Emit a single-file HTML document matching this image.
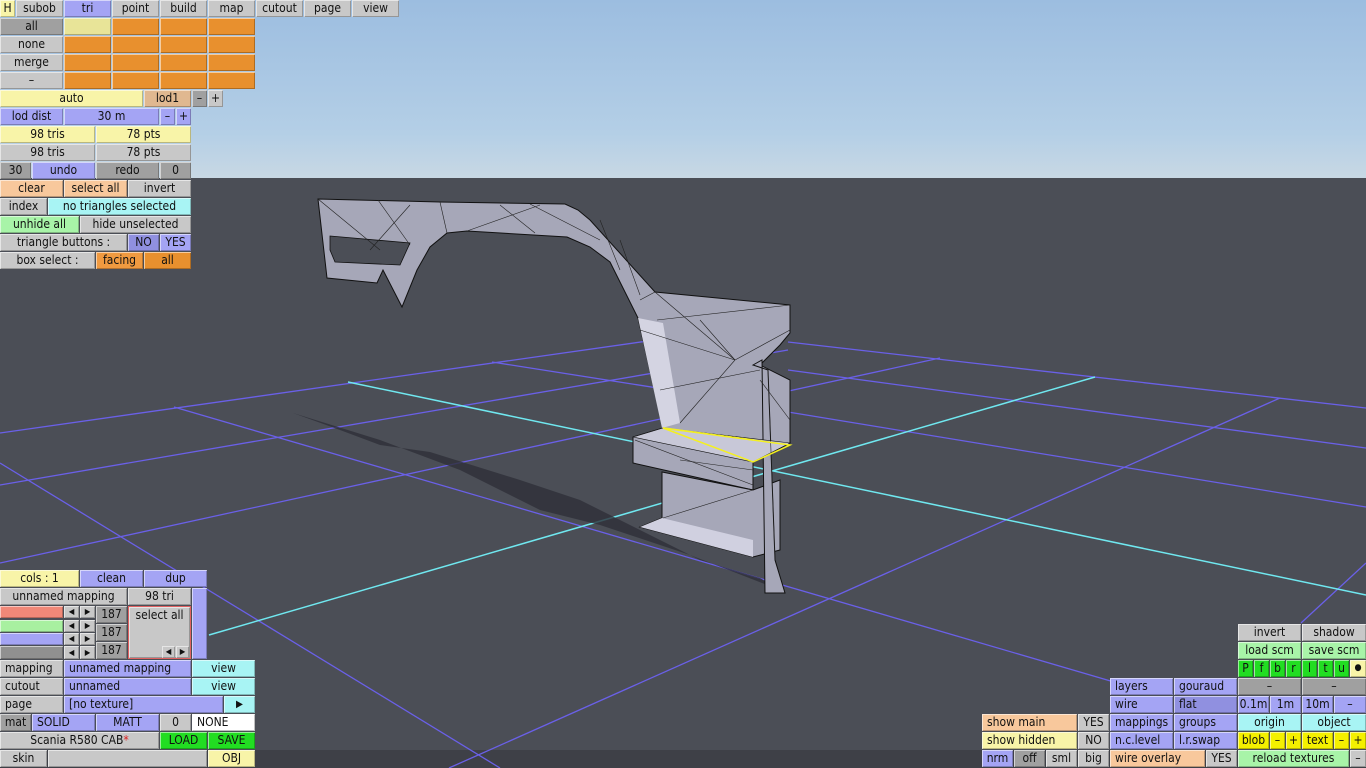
<!DOCTYPE html>
<html><head><meta charset="utf-8"><style>
*{margin:0;padding:0;box-sizing:border-box}
body{width:1366px;height:768px;overflow:hidden;position:relative;background:#4b4e56;font-family:"DejaVu Sans Condensed","Liberation Sans",sans-serif;font-size:12px;color:#111}
.b{position:absolute;height:17px;line-height:17px;text-align:center;white-space:nowrap;overflow:hidden;box-shadow:inset 1px 1px 0 rgba(255,255,255,.55),inset -1px -1px 0 rgba(0,0,0,.25)}
.l{text-align:left;padding-left:5px}
.g{background:#c8c8c8}.d{background:#a0a0a0}.u{background:#a4a4f4}.ud{background:#9090e0}.y{background:#f8f4a8}.o{background:#e8902e}.p{background:#f8c89c}.t{background:#e0b890}.c{background:#a8f4f4}.gr{background:#a8f4a8}.G{background:#22dd22}.Y{background:#f4f000}.w{background:#fff}
</style></head><body>
<div style="position:absolute;left:0;top:0;width:1366px;height:178px;background:linear-gradient(#9cbde0,#b4cfe6 75%,#c8d8e4)"></div>
<div style="position:absolute;left:0;top:750px;width:1366px;height:18px;background:#3e4047"></div>
<svg style="position:absolute;left:0;top:0" width="1366" height="768">
<g stroke="#6a60e8" stroke-width="1.3" fill="none">
<line x1="0" y1="433" x2="683" y2="336"/>
<line x1="492" y1="362" x2="683" y2="392"/>
<line x1="0" y1="485" x2="788" y2="350"/>
<line x1="0" y1="563" x2="940" y2="358"/>
<line x1="0" y1="463" x2="500" y2="768"/>
<line x1="174" y1="407" x2="1114" y2="682"/>
<line x1="788" y1="342" x2="1366" y2="408"/>
<line x1="788" y1="370" x2="1366" y2="448"/>
<line x1="788" y1="412" x2="1366" y2="507"/>
<line x1="449" y1="768" x2="1280" y2="398"/>
<line x1="1301" y1="623" x2="1366" y2="563"/>
</g>
<g stroke="#70e8f0" stroke-width="1.5"><line x1="348" y1="382" x2="1366" y2="595"/><line x1="209" y1="635" x2="1095" y2="377"/></g>
<polygon points="293,413 340,430 380,445 430,452 520,480 580,500 620,520 700,560 760,578 780,590 690,555 600,525 540,510 460,470 380,440" fill="#2e3038" opacity=".8"/>
<g fill="#a6a7b8" stroke="#111" stroke-width="1">
<polygon points="318,199 440,202 565,204 578,210 590,220 655,292 790,305 790,333 780,345 760,365 790,380 790,443 753,462 753,490 633,463 633,437 663,428 638,318 610,262 590,247 567,237 467,231 447,233 430,247 417,270 402,307 383,270 377,283 327,278"/>
<polygon points="662,472 753,490 780,480 780,550 753,557 640,527 662,518" />
<polygon points="753,365 762,360 765,593 785,593 775,560 768,370"/>
</g>
<polygon points="330,236 410,243 400,265 335,262 330,250" fill="#4b4e56" stroke="#111" stroke-width=".8"/>
<polygon points="638,318 663,323 680,423 662,428" fill="#d4d4e2"/>
<polygon points="633,437 663,428 790,443 753,462" fill="#c8c8d8" stroke="#111" stroke-width=".6"/>
<polygon points="640,527 662,518 753,540 753,557" fill="#d0d0e0"/>
<g stroke="#222" stroke-width=".6" fill="none">
<line x1="378" y1="200" x2="410" y2="245"/><line x1="440" y1="202" x2="447" y2="233"/><line x1="410" y1="205" x2="370" y2="250"/><line x1="540" y1="205" x2="467" y2="231"/><line x1="500" y1="205" x2="535" y2="233"/><line x1="530" y1="204" x2="600" y2="240"/>
<line x1="318" y1="199" x2="380" y2="250"/><line x1="600" y1="220" x2="620" y2="270"/><line x1="620" y1="240" x2="640" y2="295"/>
<line x1="655" y1="292" x2="640" y2="300"/><line x1="655" y1="292" x2="735" y2="360"/><line x1="657" y1="320" x2="790" y2="305"/>
<line x1="660" y1="390" x2="760" y2="370"/><line x1="680" y1="423" x2="735" y2="360"/><line x1="640" y1="330" x2="735" y2="360"/><line x1="735" y1="360" x2="790" y2="330"/><line x1="700" y1="320" x2="735" y2="360"/>
<line x1="635" y1="440" x2="753" y2="485"/><line x1="663" y1="518" x2="753" y2="490"/><line x1="680" y1="460" x2="753" y2="470"/>
<line x1="768" y1="370" x2="775" y2="560"/><line x1="760" y1="380" x2="790" y2="420"/>
</g>
<polygon points="663,428 790,445 753,462" fill="none" stroke="#f4f020" stroke-width="1.5"/>
<line x1="663" y1="428" x2="753" y2="440" stroke="#f4f020" stroke-width="1.5"/>
</svg>

<div class="b y" style="left:0;top:0;width:15px">H</div>
<div class="b g" style="left:16px;top:0;width:47px">subob</div>
<div class="b u" style="left:64px;top:0;width:47px">tri</div>
<div class="b g" style="left:112px;top:0;width:47px">point</div>
<div class="b g" style="left:160px;top:0;width:47px">build</div>
<div class="b g" style="left:208px;top:0;width:47px">map</div>
<div class="b g" style="left:256px;top:0;width:47px">cutout</div>
<div class="b g" style="left:304px;top:0;width:47px">page</div>
<div class="b g" style="left:352px;top:0;width:47px">view</div>

<div class="b d" style="left:0;top:18px;width:63px">all</div>
<div class="b y" style="left:64px;top:18px;width:47px;background:#e8e498"></div>
<div class="b o" style="left:112px;top:18px;width:47px"></div><div class="b o" style="left:160px;top:18px;width:47px"></div><div class="b o" style="left:208px;top:18px;width:47px"></div>
<div class="b g" style="left:0;top:36px;width:63px">none</div>
<div class="b o" style="left:64px;top:36px;width:47px"></div><div class="b o" style="left:112px;top:36px;width:47px"></div><div class="b o" style="left:160px;top:36px;width:47px"></div><div class="b o" style="left:208px;top:36px;width:47px"></div>
<div class="b g" style="left:0;top:54px;width:63px">merge</div>
<div class="b o" style="left:64px;top:54px;width:47px"></div><div class="b o" style="left:112px;top:54px;width:47px"></div><div class="b o" style="left:160px;top:54px;width:47px"></div><div class="b o" style="left:208px;top:54px;width:47px"></div>
<div class="b g" style="left:0;top:72px;width:63px">–</div>
<div class="b o" style="left:64px;top:72px;width:47px"></div><div class="b o" style="left:112px;top:72px;width:47px"></div><div class="b o" style="left:160px;top:72px;width:47px"></div><div class="b o" style="left:208px;top:72px;width:47px"></div>

<div class="b y" style="left:0;top:90px;width:143px">auto</div>
<div class="b t" style="left:144px;top:90px;width:47px">lod1</div>
<div class="b d" style="left:192px;top:90px;width:15px">–</div>
<div class="b g" style="left:208px;top:90px;width:15px">+</div>

<div class="b u" style="left:0;top:108px;width:63px">lod dist</div>
<div class="b u" style="left:64px;top:108px;width:95px">30 m</div>
<div class="b u" style="left:160px;top:108px;width:15px">–</div>
<div class="b u" style="left:176px;top:108px;width:15px">+</div>

<div class="b y" style="left:0;top:126px;width:95px">98 tris</div>
<div class="b y" style="left:96px;top:126px;width:95px">78 pts</div>
<div class="b g" style="left:0;top:144px;width:95px">98 tris</div>
<div class="b g" style="left:96px;top:144px;width:95px">78 pts</div>

<div class="b d" style="left:0;top:162px;width:31px">30</div>
<div class="b u" style="left:32px;top:162px;width:63px">undo</div>
<div class="b d" style="left:96px;top:162px;width:63px">redo</div>
<div class="b d" style="left:160px;top:162px;width:31px">0</div>

<div class="b p" style="left:0;top:180px;width:63px">clear</div>
<div class="b p" style="left:64px;top:180px;width:63px">select all</div>
<div class="b g" style="left:128px;top:180px;width:63px">invert</div>

<div class="b g" style="left:0;top:198px;width:47px">index</div>
<div class="b c" style="left:48px;top:198px;width:143px">no triangles selected</div>

<div class="b gr" style="left:0;top:216px;width:79px">unhide all</div>
<div class="b g" style="left:80px;top:216px;width:111px">hide unselected</div>

<div class="b g" style="left:0;top:234px;width:127px">triangle buttons :</div>
<div class="b ud" style="left:128px;top:234px;width:31px">NO</div>
<div class="b u" style="left:160px;top:234px;width:31px">YES</div>

<div class="b g" style="left:0;top:252px;width:95px">box select :</div>
<div class="b o" style="left:96px;top:252px;width:47px;background:#f09a40">facing</div>
<div class="b o" style="left:144px;top:252px;width:47px">all</div>

<div class="b y" style="left:0;top:570px;width:79px">cols : 1</div>
<div class="b u" style="left:80px;top:570px;width:63px">clean</div>
<div class="b u" style="left:144px;top:570px;width:63px">dup</div>
<div class="b g" style="left:0;top:588px;width:127px">unnamed mapping</div>
<div class="b g" style="left:128px;top:588px;width:63px">98 tri</div>
<div class="b u" style="left:192px;top:588px;width:15px;height:71px"></div>
<div class="b" style="left:0;top:606px;width:63px;height:12px;background:#f08878"></div>
<div class="b" style="left:0;top:620px;width:63px;height:12px;background:#a8f0a0"></div>
<div class="b" style="left:0;top:633px;width:63px;height:12px;background:#a4a4f4"></div>
<div class="b" style="left:0;top:646px;width:63px;height:13px;background:#909090"></div>
<div class="b g" style="left:64px;top:606px;width:15px;height:12px;font-size:8px;line-height:12px">◀</div><div class="b g" style="left:80px;top:606px;width:15px;height:12px;font-size:8px;line-height:12px">▶</div>
<div class="b g" style="left:64px;top:620px;width:15px;height:12px;font-size:8px;line-height:12px">◀</div><div class="b g" style="left:80px;top:620px;width:15px;height:12px;font-size:8px;line-height:12px">▶</div>
<div class="b g" style="left:64px;top:633px;width:15px;height:12px;font-size:8px;line-height:12px">◀</div><div class="b g" style="left:80px;top:633px;width:15px;height:12px;font-size:8px;line-height:12px">▶</div>
<div class="b g" style="left:64px;top:646px;width:15px;height:13px;font-size:8px;line-height:13px">◀</div><div class="b g" style="left:80px;top:646px;width:15px;height:13px;font-size:8px;line-height:13px">▶</div>
<div class="b d" style="left:96px;top:606px;width:31px">187</div>
<div class="b d" style="left:96px;top:624px;width:31px">187</div>
<div class="b d" style="left:96px;top:642px;width:31px">187</div>
<div class="b g" style="left:128px;top:606px;width:63px;height:53px;border:1px solid #e06060;line-height:16px">select all</div>
<div class="b g" style="left:162px;top:646px;width:13px;height:12px;font-size:8px;line-height:12px">◀</div><div class="b g" style="left:176px;top:646px;width:13px;height:12px;font-size:8px;line-height:12px">▶</div>

<div class="b g l" style="left:0;top:660px;width:63px">mapping</div>
<div class="b u l" style="left:64px;top:660px;width:127px">unnamed mapping</div>
<div class="b c" style="left:192px;top:660px;width:63px">view</div>
<div class="b g l" style="left:0;top:678px;width:63px">cutout</div>
<div class="b u l" style="left:64px;top:678px;width:127px">unnamed</div>
<div class="b c" style="left:192px;top:678px;width:63px">view</div>
<div class="b g l" style="left:0;top:696px;width:63px">page</div>
<div class="b u l" style="left:64px;top:696px;width:159px">[no texture]</div>
<div class="b c" style="left:224px;top:696px;width:31px;font-size:10px">▶</div>
<div class="b d" style="left:0;top:714px;width:31px">mat</div>
<div class="b u l" style="left:32px;top:714px;width:63px">SOLID</div>
<div class="b u" style="left:96px;top:714px;width:63px">MATT</div>
<div class="b g" style="left:160px;top:714px;width:31px">0</div>
<div class="b w l" style="left:192px;top:714px;width:63px">NONE</div>
<div class="b g" style="left:0;top:732px;width:159px">Scania R580 CAB<span style="color:#e02020">*</span></div>
<div class="b G" style="left:160px;top:732px;width:47px">LOAD</div>
<div class="b G" style="left:208px;top:732px;width:47px">SAVE</div>
<div class="b g" style="left:0;top:750px;width:47px">skin</div>
<div class="b g" style="left:48px;top:750px;width:159px"></div>
<div class="b y" style="left:208px;top:750px;width:47px">OBJ</div>

<div class="b g" style="left:1238px;top:624px;width:63px">invert</div>
<div class="b g" style="left:1302px;top:624px;width:64px">shadow</div>
<div class="b gr" style="left:1238px;top:642px;width:63px">load scm</div>
<div class="b gr" style="left:1302px;top:642px;width:64px">save scm</div>
<div class="b G" style="left:1238px;top:660px;width:15px">P</div>
<div class="b G" style="left:1254px;top:660px;width:15px">f</div>
<div class="b G" style="left:1270px;top:660px;width:15px">b</div>
<div class="b G" style="left:1286px;top:660px;width:15px">r</div>
<div class="b G" style="left:1302px;top:660px;width:15px">l</div>
<div class="b G" style="left:1318px;top:660px;width:15px">t</div>
<div class="b G" style="left:1334px;top:660px;width:15px">u</div>
<div class="b y" style="left:1350px;top:660px;width:16px;font-size:9px">●</div>
<div class="b u l" style="left:1110px;top:678px;width:63px">layers</div>
<div class="b u l" style="left:1174px;top:678px;width:63px">gouraud</div>
<div class="b d" style="left:1238px;top:678px;width:63px">–</div>
<div class="b d" style="left:1302px;top:678px;width:64px">–</div>
<div class="b u l" style="left:1110px;top:696px;width:63px">wire</div>
<div class="b ud l" style="left:1174px;top:696px;width:63px">flat</div>
<div class="b u" style="left:1238px;top:696px;width:31px">0.1m</div>
<div class="b u" style="left:1270px;top:696px;width:31px">1m</div>
<div class="b u" style="left:1302px;top:696px;width:31px">10m</div>
<div class="b u" style="left:1334px;top:696px;width:32px">–</div>
<div class="b p l" style="left:982px;top:714px;width:95px">show main</div>
<div class="b g" style="left:1078px;top:714px;width:31px">YES</div>
<div class="b u l" style="left:1110px;top:714px;width:63px">mappings</div>
<div class="b u l" style="left:1174px;top:714px;width:63px">groups</div>
<div class="b c" style="left:1238px;top:714px;width:63px">origin</div>
<div class="b c" style="left:1302px;top:714px;width:64px">object</div>
<div class="b y l" style="left:982px;top:732px;width:95px">show hidden</div>
<div class="b g" style="left:1078px;top:732px;width:31px">NO</div>
<div class="b u l" style="left:1110px;top:732px;width:63px">n.c.level</div>
<div class="b u l" style="left:1174px;top:732px;width:63px">l.r.swap</div>
<div class="b Y" style="left:1238px;top:732px;width:31px">blob</div>
<div class="b Y" style="left:1270px;top:732px;width:15px">–</div>
<div class="b Y" style="left:1286px;top:732px;width:15px">+</div>
<div class="b Y" style="left:1302px;top:732px;width:31px">text</div>
<div class="b Y" style="left:1334px;top:732px;width:15px">–</div>
<div class="b Y" style="left:1350px;top:732px;width:16px">+</div>
<div class="b u" style="left:982px;top:750px;width:31px">nrm</div>
<div class="b d" style="left:1014px;top:750px;width:31px">off</div>
<div class="b g" style="left:1046px;top:750px;width:31px">sml</div>
<div class="b g" style="left:1078px;top:750px;width:31px">big</div>
<div class="b p l" style="left:1110px;top:750px;width:95px">wire overlay</div>
<div class="b g" style="left:1206px;top:750px;width:31px">YES</div>
<div class="b gr" style="left:1238px;top:750px;width:111px">reload textures</div>
<div class="b g" style="left:1350px;top:750px;width:16px">–</div>
</body></html>
